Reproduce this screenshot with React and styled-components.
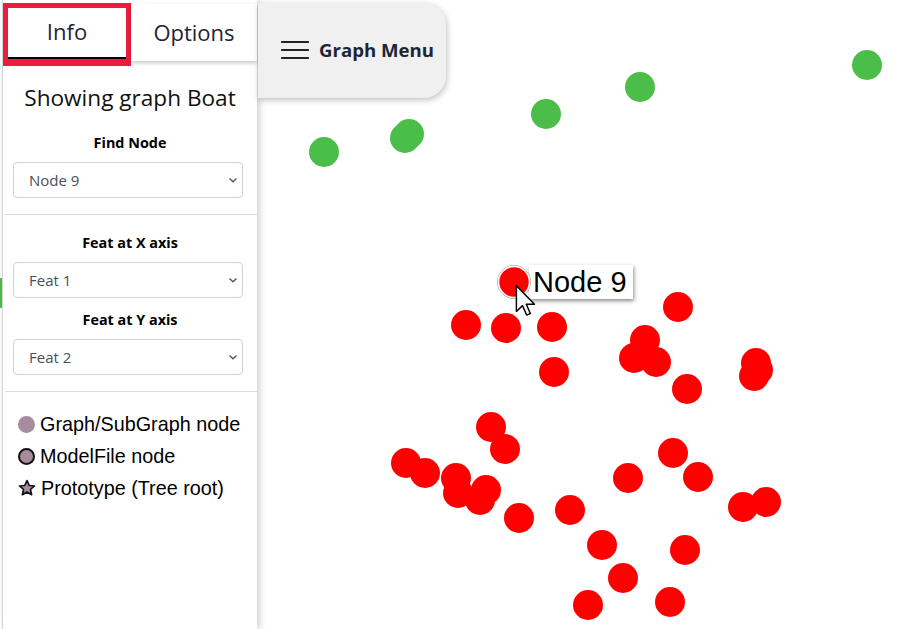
import React from "react";
import styled, { createGlobalStyle } from "styled-components";

const Global = createGlobalStyle`
  html, body { margin: 0; padding: 0; background: #fff; }
  body { font-family: "Open Sans", "Noto Sans", sans-serif; color: #212529; }
  * { box-sizing: border-box; }
`;

const Root = styled.div`
  position: relative;
  width: 100vw;
  height: 100vh;
  overflow: hidden;
`;

const GraphLayer = styled.svg`
  position: absolute;
  inset: 0;
  width: 100%;
  height: 100%;
`;

const Overlay = styled.div`
  position: relative;
  display: flex;
  align-items: flex-start;
  height: 100%;
`;

const Sidebar = styled.aside`
  width: 254px;
  height: 100%;
  margin-left: 3px;
  background: #fff;
  box-shadow: -1px 0 0 #d6d6d6, 2px 0 7px rgba(0, 0, 0, 0.22);
  display: flex;
  flex-direction: column;
`;

const TabBar = styled.div`
  display: flex;
  align-items: flex-start;
  padding-top: 3px;
`;

const Tab = styled.button`
  flex: 0 0 ${(p) => (p.$active ? "128px" : "126px")};
  margin-top: ${(p) => (p.$active ? "0" : "1px")};
  height: ${(p) => (p.$active ? "63px" : "57px")};
  background: #fff;
  border: ${(p) => (p.$active ? "5px solid #ec1c40" : "none")};
  border-bottom-width: ${(p) => (p.$active ? "7px" : "0")};
  box-shadow: ${(p) => (p.$active ? "none" : "0 2px 4px rgba(0,0,0,0.22)")};
  padding: 0;
  font-family: "Open Sans", "Noto Sans", sans-serif;
  font-size: 22px;
  color: #1e2533;
  display: flex;
  cursor: pointer;
`;

const TabInner = styled.span`
  flex: 1;
  display: flex;
  align-items: center;
  justify-content: center;
  border-bottom: ${(p) => (p.$active ? "2px solid #000" : "none")};
  padding-bottom: ${(p) => (p.$active ? "4px" : "2px")};
`;

const Content = styled.div`
  display: flex;
  flex-direction: column;
`;

const Title = styled.h2`
  margin: 18px 0 0;
  font-size: 22.6px;
  font-weight: 400;
  line-height: 28px;
  text-align: center;
  color: #111;
`;

const Label = styled.div`
  margin-top: ${(p) => p.$mt}px;
  font-size: 14.4px;
  font-weight: 700;
  line-height: 20px;
  text-align: center;
  color: #000;
`;

const SelectWrap = styled.div`
  position: relative;
  margin: 9px 14px 0 10px;
  height: 36px;
`;

const Select = styled.select`
  appearance: none;
  width: 100%;
  height: 100%;
  border: 1px solid #ced4da;
  border-radius: 4px;
  background: #fff;
  padding: 0 28px 0 15px;
  font-family: "Open Sans", "Noto Sans", sans-serif;
  font-size: 15px;
  color: #495057;
  outline: none;
`;

const Chevron = styled.svg`
  position: absolute;
  right: 5px;
  top: 14px;
  pointer-events: none;
`;

const Divider = styled.hr`
  margin: ${(p) => p.$mt}px 0 0 2px;
  border: none;
  border-top: 1px solid #dddddd;
`;

const Legend = styled.ul`
  list-style: none;
  margin: 16px 0 0;
  padding: 0 0 0 15px;
  font-family: "Liberation Sans", Arial, sans-serif;
  font-size: 19.8px;
  color: #000;
`;

const LegendItem = styled.li`
  display: flex;
  align-items: center;
  gap: 5px;
  height: 32px;
`;

const Dot = styled.span`
  flex: 0 0 17px;
  width: 17px;
  height: 17px;
  border-radius: 50%;
  background: #a78b9f;
  border: ${(p) => (p.$outlined ? "2px solid #111" : "none")};
`;

const MenuButton = styled.button`
  margin-top: 3px;
  margin-left: 1px;
  width: 188px;
  height: 95px;
  background: #f0f0f0;
  border: none;
  border-radius: 0 22px 22px 0;
  box-shadow: 1px 2px 6px rgba(0, 0, 0, 0.25);
  display: flex;
  align-items: center;
  gap: 10px;
  padding: 0 0 2px 23px;
  font-family: "Open Sans", "Noto Sans", sans-serif;
  font-weight: 700;
  font-size: 18.6px;
  color: #1e2533;
  cursor: pointer;
`;

const Tooltip = styled.div`
  position: absolute;
  left: 529px;
  top: 265px;
  width: 104px;
  height: 34px;
  background: #fff;
  box-shadow: 1px 2px 4px rgba(0, 0, 0, 0.45);
  font-family: "Liberation Sans", Arial, sans-serif;
  font-size: 29px;
  line-height: 34px;
  padding-left: 4px;
  color: #000;
`;

const Cursor = styled.svg`
  position: absolute;
  left: 515px;
  top: 285px;
`;

const FocusDot = styled.svg`
  position: absolute;
  left: 496px;
  top: 264px;
`;

const RED = [
  [466, 325], [506, 328], [552, 327], [678, 307], [645, 340], [634, 358],
  [656, 362], [554, 372], [687, 389], [756, 363], [758, 370], [754, 376],
  [491, 427], [505, 449], [406, 463], [425, 473], [456, 478], [458, 493],
  [486, 490], [480, 500], [519, 518], [570, 510], [628, 478], [673, 453],
  [698, 477], [743, 507], [766, 502], [602, 545], [685, 550], [623, 578],
  [588, 605], [670, 602],
];

const GREEN = [
  [324, 152], [405, 138], [409, 134], [546, 114], [640, 87], [867, 65], [0, 293],
];

const Hamburger = () => (
  <svg width="28" height="20" viewBox="0 0 28 20">
    <g stroke="#222" strokeWidth="2.2" strokeLinecap="round">
      <line x1="1" y1="2" x2="27" y2="2" />
      <line x1="1" y1="10" x2="27" y2="10" />
      <line x1="1" y1="18" x2="27" y2="18" />
    </g>
  </svg>
);

const Star = () => (
  <svg width="18" height="18" viewBox="0 0 24 24">
    <polygon
      points="12,2 14.9,8.6 22,9.3 16.6,14 18.2,21 12,17.3 5.8,21 7.4,14 2,9.3 9.1,8.6"
      fill="#a78b9f"
      stroke="#111"
      strokeWidth="2.2"
      strokeLinejoin="round"
    />
  </svg>
);

const SelectField = ({ value }) => (
  <SelectWrap>
    <Select defaultValue={value}>
      <option>{value}</option>
    </Select>
    <Chevron width="10" height="8" viewBox="0 0 10 8">
      <path d="M1.5 2.5 L5 5.8 L8.5 2.5" fill="none" stroke="#555" strokeWidth="1.4" />
    </Chevron>
  </SelectWrap>
);

export default function App() {
  return (
    <Root>
      <Global />
      <GraphLayer>
        {GREEN.map(([x, y], i) => (
          <circle key={"g" + i} cx={x} cy={y} r="15" fill="#4bbe4a" />
        ))}
        {RED.map(([x, y], i) => (
          <circle key={"r" + i} cx={x} cy={y} r="15" fill="#ff0000" />
        ))}
      </GraphLayer>
      <Overlay>
        <Sidebar>
          <TabBar>
            <Tab $active>
              <TabInner $active>Info</TabInner>
            </Tab>
            <Tab>
              <TabInner>Options</TabInner>
            </Tab>
          </TabBar>
          <Content>
            <Title>Showing graph Boat</Title>
            <Label $mt={21}>Find Node</Label>
            <SelectField value="Node 9" />
            <Divider $mt={16} />
            <Label $mt={18}>Feat at X axis</Label>
            <SelectField value="Feat 1" />
            <Label $mt={12}>Feat at Y axis</Label>
            <SelectField value="Feat 2" />
            <Divider $mt={16} />
            <Legend>
              <LegendItem>
                <Dot />
                Graph/SubGraph node
              </LegendItem>
              <LegendItem>
                <Dot $outlined />
                ModelFile node
              </LegendItem>
              <LegendItem>
                <Star />
                Prototype (Tree root)
              </LegendItem>
            </Legend>
          </Content>
        </Sidebar>
        <MenuButton>
          <Hamburger />
          Graph Menu
        </MenuButton>
      </Overlay>
      <Tooltip>Node 9</Tooltip>
      <FocusDot width="36" height="36" viewBox="0 0 36 36">
        <circle cx="18" cy="18" r="16.5" fill="none" stroke="rgba(0,0,0,0.35)" strokeWidth="1" />
        <circle cx="18" cy="18" r="15.5" fill="#ff0000" stroke="#fff" strokeWidth="1.6" />
      </FocusDot>
      <Cursor width="22" height="32" viewBox="0 0 13 20">
        <path
          d="M0.5 0.5 L0.5 16.5 L4.3 12.9 L6.9 18.8 L9.2 17.8 L6.7 12 L11.8 12 Z"
          fill="#fff"
          stroke="#000"
          strokeWidth="0.9"
          strokeLinejoin="round"
        />
      </Cursor>
    </Root>
  );
}
